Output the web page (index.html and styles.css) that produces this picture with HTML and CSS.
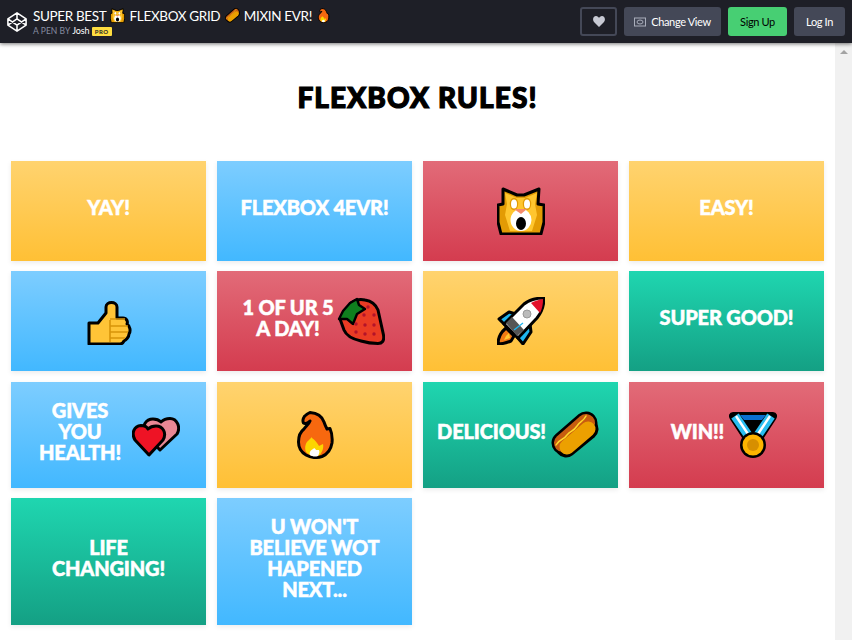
FILE: index.html
```html
<!DOCTYPE html>
<html lang="en">
<head>
<meta charset="utf-8">
<title>Flexbox Rules</title>
<link rel="stylesheet" href="styles.css">
</head>
<body>
<svg class="defs" aria-hidden="true">
  <symbol id="cat" viewBox="0 0 48 48">
    <path d="M6 2 20 8H27L42 2 41 17 47 18V35L44 47H4L1 35V18L6 17Z" fill="#e39b04" stroke="#000" stroke-width="3" stroke-linejoin="round"/>
    <path d="M8 6 20 11H28L40 6 38 17 40 28 35 44H13L8 28 10 17Z" fill="#ffc62f"/>
    <ellipse cx="17" cy="17" rx="4.200" ry="6.200" fill="#e39b04"/>
    <ellipse cx="30" cy="17" rx="4.200" ry="6.200" fill="#e39b04"/>
    <ellipse cx="17" cy="17" rx="3" ry="4.500" fill="#fff"/>
    <ellipse cx="30" cy="17" rx="3" ry="4.500" fill="#fff"/>
    <ellipse cx="24" cy="33" rx="10.500" ry="11" fill="#fff"/>
    <path d="M17 22H30L24 27Z" fill="#f58b6b"/>
    <ellipse cx="24" cy="36.500" rx="5" ry="6.500" fill="#000"/>
  </symbol>
  <symbol id="thumb" viewBox="0 0 48 48">
    <g transform="translate(3 5)">
      <path d="M1 21H10L18 11V5C18 -1 29 -1 29 5V16H35C39 16 40 20 39 22 42 24 43 29 41 32 41 35 38 38 36 39 35 41 34 42 32 42H1Z" fill="#ffc437" stroke="#000" stroke-width="3" stroke-linejoin="round"/>
      <path d="M22 18V40M22 17H37M22 24H40M22 30H40M22 36H37" fill="none" stroke="#d8940a" stroke-width="1.600"/>
    </g>
  </symbol>
  <symbol id="berry" viewBox="0 0 48 48">
    <path d="M14 6C18 3 24 2 28 3 34 4 39 8 41 13L46.500 38C47.500 44 45 46.500 41 46.500 35 46.500 29 45.500 24 44 15 42 9 38 7 33L3 22Z" fill="#ea3b24" stroke="#000" stroke-width="3" stroke-linejoin="round"/>
    <path d="M2 22 6 14 13 6 20 2 22 8 28 12 20 17 16 27 10 22Z" fill="#0f7f1e" stroke="#000" stroke-width="2.400" stroke-linejoin="round"/>
    <g fill="#b3132a">
      <circle cx="31" cy="10" r="1.700"/><circle cx="27" cy="18" r="1.700"/><circle cx="37" cy="18" r="1.700"/>
      <circle cx="19" cy="27" r="1.700"/><circle cx="28" cy="28" r="1.700"/><circle cx="37" cy="28" r="1.700"/>
      <circle cx="19" cy="35" r="1.700"/><circle cx="28" cy="37" r="1.700"/><circle cx="37" cy="37" r="1.700"/>
    </g>
  </symbol>
  <symbol id="rocket" viewBox="0 0 48 48">
    <path d="M9 31 17 39 14 44C9 46 5 47 1 47 1 41 3 36 9 31Z" fill="#f07a12" stroke="#000" stroke-width="3" stroke-linejoin="round"/>
    <path d="M9 39 12 36 13 41 7 43Z" fill="#ffc62f"/>
    <path d="M2 22 12 15 19 17 9 29Z" fill="#1fb6f0" stroke="#000" stroke-width="3" stroke-linejoin="round"/>
    <path d="M33 27 34 35 26 47 20 40Z" fill="#1fb6f0" stroke="#000" stroke-width="3" stroke-linejoin="round"/>
    <path d="M47 1C47 9 45 15 40 21L21 41 7 27 27 7C32 3 39 1 47 1Z" fill="#fff" stroke="#000" stroke-width="3" stroke-linejoin="round"/>
    <path d="M46 2C46 8 45 12 43 16L34 6C37 4 41 3 46 2Z" fill="#e3112a"/>
    <path d="M9 26 15 20 27 33 20 39Z" fill="#555"/>
    <path d="M17 33 26 26" stroke="#1fb6f0" stroke-width="1.300"/>
    <circle cx="30" cy="17" r="4" fill="#bbb" stroke="#999"/>
  </symbol>
  <symbol id="hearts" viewBox="0 0 48 48">
    <g transform="translate(0 6)" stroke="#000" stroke-width="3" stroke-linejoin="round">
      <path d="M28 33 13 17C9 9 14 2 21 2 24 2 27 3 29 5 31 3 34 1.500 38 1.500 45 1.500 49 10 45 17Z" fill="#e98794"/>
      <path d="M17 38 3 23C-1 16 2 9 9 8.500 12 8.500 15 10 16 12 18 10 21 9 24 9 31 9 35 16 31 23Z" fill="#ee1325"/>
    </g>
  </symbol>
  <symbol id="fire" viewBox="0 0 48 48">
    <g transform="translate(6 0)">
      <path d="M13 1.500C20 2 25 5 27 11 28 14 29 16 30 18L33 17.500C35 22 35.500 27 35 32 34 38 31 43 25 45.500 20 47 14 47 9 44 4 41 1.500 36 1.500 31 1.500 26 3 21 7 18 9 15 12 13 13 10 11 12 8 13 6.500 12 5 9 7 5 9 4 10 3 12 2 13 1.500Z" fill="#f7680f" stroke="#000" stroke-width="3" stroke-linejoin="round"/>
      <path d="M9 41C7 36 9 31 12 29 14 27 15 25 15 27 18 29 21 33 22 35L26 33C27 37 25 41 23 44 18 46 13 45 9 41Z" fill="#fcd500"/>
      <path d="M13 44C12 41 14 39 16 38 17 37 18 37 19 39L22 39C23 41 22 43 21 45 18 46 15 45.500 13 44Z" fill="#fff"/>
    </g>
  </symbol>
  <symbol id="dog" viewBox="0 0 48 48">
    <g fill="none" stroke-linecap="round">
      <path d="M12 32 35 12" stroke="#000" stroke-width="23"/>
      <path d="M15 36 37 18" stroke="#000" stroke-width="21"/>
      <path d="M12 32 35 12" stroke="#c75c10" stroke-width="18"/>
      <path d="M16 36 37 18" stroke="#eca000" stroke-width="15"/>
      <path d="M5 34C9 27 12 30 16 24 20 19 22 21 26 15 29 10 32 11 35 5" stroke="#ffd92b" stroke-width="1.500"/>
    </g>
  </symbol>
  <symbol id="medal" viewBox="0 0 48 48">
    <path d="M4 2H44C47 2 48 5 46 8L33 28H15L2 8C0 5 1 2 4 2Z" fill="#000" stroke="#000" stroke-width="2" stroke-linejoin="round"/>
    <path d="M11 4H37L33 9H15Z" fill="#0a6fd0"/>
    <path d="M6 5 21 27M42 5 27 27" stroke="#29bdf0" stroke-width="9"/>
    <path d="M7 5 21 26M41 5 27 26" stroke="#fff" stroke-width="2.400"/>
    <circle cx="24" cy="34" r="13" fill="#000"/>
    <circle cx="24" cy="34" r="10.500" fill="#fdb400"/>
    <circle cx="24" cy="34" r="6" fill="#d78f00"/>
  </symbol>
</svg>

<header class="bar">
  <div class="brand">
    <svg class="logo" viewBox="1 1 22 22"><path d="M12 2 22 8.500V15.500L12 22 2 15.500V8.500ZM12 2V8.500M12 22V15.500M2 8.500 12 15.500 22 8.500M2 15.500 12 8.500 22 15.500" fill="none" stroke="#fff" stroke-width="1.700" stroke-linejoin="round"/></svg>
    <div class="pen">
      <h1 class="pen-title">SUPER BEST <svg class="mini"><use href="#cat"/></svg> FLEXBOX GRID <svg class="mini"><use href="#dog"/></svg> MIXIN EVR! <svg class="mini"><use href="#fire"/></svg></h1>
      <div class="byline">A PEN BY <span class="author">Josh</span> <span class="pro">PRO</span></div>
    </div>
  </div>
  <nav class="actions">
    <button class="btn btn-heart"><svg class="heart" viewBox="0 0 12 11"><path d="M6 11 1 6C-1 3.500 .5 0 3 0 4.500 0 5.500 1 6 2 6.500 1 7.500 0 9 0 11.500 0 13 3.500 11 6Z" fill="#c7c9d3"/></svg></button>
    <button class="btn btn-view"><svg class="eye" viewBox="0 0 12 10"><rect x=".5" y="1" width="11" height="8" fill="none" stroke="#aaaebc"/><ellipse cx="6" cy="5" rx="3" ry="2" fill="none" stroke="#aaaebc"/></svg>Change View</button>
    <button class="btn btn-sign">Sign Up</button>
    <button class="btn btn-log">Log In</button>
  </nav>
</header>

<div class="view">
  <main class="page">
    <h2 class="headline">FLEXBOX RULES!</h2>
    <section class="grid">
      <div class="card yellow"><p class="t">YAY!</p></div>
      <div class="card blue"><p class="t">FLEXBOX 4EVR!</p></div>
      <div class="card red"><svg class="ico"><use href="#cat"/></svg></div>
      <div class="card yellow"><p class="t">EASY!</p></div>
      <div class="card blue"><svg class="ico"><use href="#thumb"/></svg></div>
      <div class="card red tight"><p class="t">1 OF UR 5<br>A DAY!</p><svg class="ico"><use href="#berry"/></svg></div>
      <div class="card yellow"><svg class="ico"><use href="#rocket"/></svg></div>
      <div class="card green"><p class="t">SUPER GOOD!</p></div>
      <div class="card blue health"><p class="t">GIVES<br>YOU<br>HEALTH!</p><svg class="ico"><use href="#hearts"/></svg></div>
      <div class="card yellow"><svg class="ico"><use href="#fire"/></svg></div>
      <div class="card green apart"><p class="t">DELICIOUS!</p><svg class="ico"><use href="#dog"/></svg></div>
      <div class="card red apart"><p class="t">WIN!!</p><svg class="ico"><use href="#medal"/></svg></div>
      <div class="card green"><p class="t">LIFE<br>CHANGING!</p></div>
      <div class="card blue"><p class="t">U WON'T<br>BELIEVE WOT<br>HAPENED<br>NEXT...</p></div>
    </section>
  </main>
  <aside class="scroll"><span class="arrow"></span></aside>
</div>
</body>
</html>
```

FILE: styles.css
```css
* { box-sizing: border-box; }
html, body { margin: 0; height: 640px; overflow: hidden; background: #fff; }
body { display: flex; flex-direction: column; font-family: "Lato", sans-serif; }
.defs { width: 0; height: 0; display: block; overflow: hidden; }

.bar {
  height: 43px;
  flex: none;
  display: flex;
  justify-content: space-between;
  align-items: center;
  padding: 0 7px;
  background: #1e1f27;
  box-shadow: 0 1px 4px rgba(0,0,0,.55);
  z-index: 2;
}
.brand { display: flex; align-items: center; gap: 6px; }
.logo { width: 20px; height: 20px; display: block; }
.pen { display: flex; flex-direction: column; margin-top: -1px; }
.pen-title { margin: 0; font-size: 13.500px; line-height: 19px; font-weight: 400; color: #fff; letter-spacing: -.35px; white-space: nowrap; }
.mini { width: 15px; height: 15px; vertical-align: -2px; margin: 0 1.200px; }
.byline { font-size: 8.500px; line-height: 10px; color: #868ca0; letter-spacing: .05px; white-space: nowrap; }
.author { color: #fff; letter-spacing: -.1px; font-size: 9px; }
.pro { display: inline-block; background: #ffdd40; color: #1e1f27; font-size: 6px; font-weight: 700; line-height: 9px; padding: 0 3px; border-radius: 1px; letter-spacing: .5px; }

.actions { display: flex; gap: 7px; }
.btn {
  height: 29px;
  margin: 0;
  border: 0;
  border-radius: 3px;
  font-family: "Lato", sans-serif;
  font-size: 11px;
  font-weight: 400;
  color: #fff;
  background: #444857;
  display: flex;
  align-items: center;
  justify-content: center;
  letter-spacing: -.35px;
}
.btn-heart { width: 37px; background: transparent; border: 2px solid #444857; }
.heart { width: 12px; height: 11px; }
.btn-view { width: 97px; gap: 5px; }
.eye { width: 12px; height: 10px; }
.btn-sign { width: 59px; background: #47cf73; color: #000; }
.btn-log { width: 51px; }

.view { flex: 1; display: flex; min-height: 0; }
.page { flex: 1; min-width: 0; padding: 0 11px; }
.scroll { width: 17px; flex: none; background: #f1f1f1; display: flex; justify-content: center; padding-top: 7px; }
.arrow { width: 0; height: 0; border: 4px solid transparent; border-top: 0; border-bottom: 4px solid #a3a3a3; }

.headline {
  margin: 0;
  height: 118px;
  padding-top: 38px;
  text-align: center;
  font-size: 28px;
  line-height: 32px;
  font-weight: 900;
  color: #000;
  letter-spacing: 1.100px;
  -webkit-text-stroke: 1.200px #000;
}

.grid { display: grid; grid-template-columns: repeat(4, 195px); gap: 10.400px 11px; align-items: stretch; }
.card {
  min-height: 100px;
  padding: 18px 8px 25px;
  display: flex;
  align-items: center;
  justify-content: center;
  box-shadow: 0 2px 5px rgba(0,0,0,.08);
}
.t {
  margin: 0;
  font-size: 20px;
  line-height: 21px;
  font-weight: 900;
  text-align: center;
  color: #fff;
  letter-spacing: -.15px;
  white-space: nowrap;
  -webkit-text-stroke: .5px #fff;
}
.ico { width: 48px; height: 48px; flex: none; margin-top: 7px; }
.yellow { background: linear-gradient(#ffd36f, #ffc035); }
.blue { background: linear-gradient(#7dcdff, #42b8ff); }
.red { background: linear-gradient(#e26b78, #d43c4f); }
.green { background: linear-gradient(#1fd6b0, #14a084); }
.tight { padding-right: 10px; }
.tight .t { margin-right: 3px; }
.apart { gap: 5px; padding-right: 13px; }
.health { padding-right: 17px; }
.health .t { width: 104px; }
```
